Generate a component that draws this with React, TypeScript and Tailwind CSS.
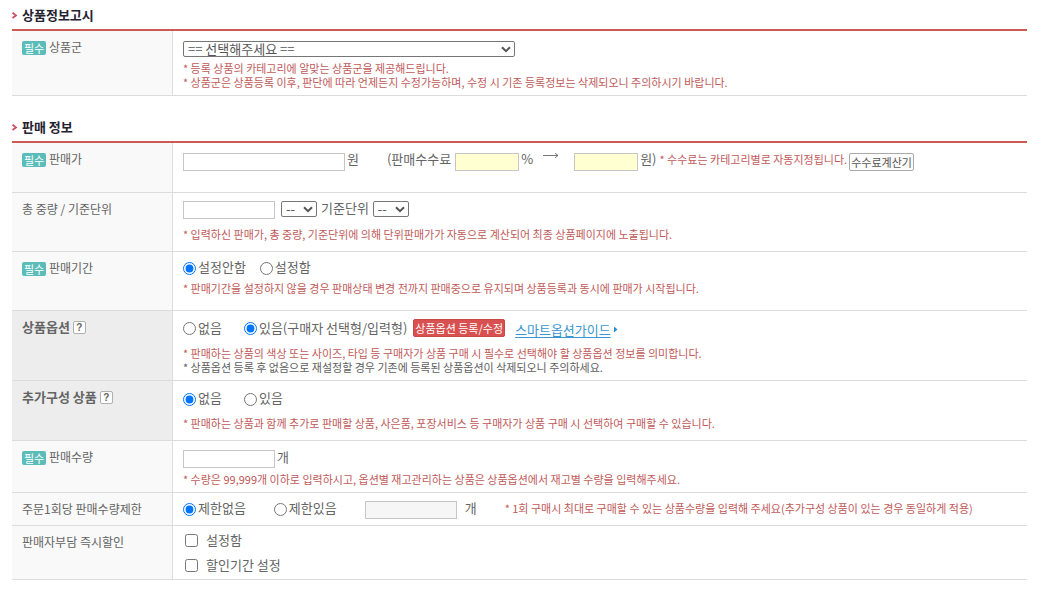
import type { ReactNode } from "react";

function SectionTitle({ children }: { children: ReactNode }) {
  return (
    <h2 className="flex h-7 items-center gap-1 border-b-2 border-[#cb5a50] box-content text-[13px] font-bold text-[#252230]">
      <svg width="6" height="7" viewBox="0 0 6 7" className="shrink-0" aria-hidden="true">
        <path d="M0.5 0.8 4 3.4 0.5 6" fill="none" stroke="#cc4a62" strokeWidth="1.7" />
      </svg>
      {children}
    </h2>
  );
}

type RowProps = {
  label: string;
  required?: boolean;
  help?: boolean;
  className: string;
  children: ReactNode;
};

function Row({ label, required, help, className, children }: RowProps) {
  return (
    <div role="group" aria-label={label} className="flex border-b border-[#dcdcdc]">
      <div
        className={`flex w-[161px] shrink-0 items-start gap-[3px] border-r border-[#dcdcdc] pt-2 pl-2.5 ${
          help ? "bg-[#ededed]" : "bg-[#f9f9f9]"
        }`}
      >
        {required && (
          <span className="mt-0.5 flex h-3.5 w-6 shrink-0 items-center justify-center rounded-[2px] bg-[#5bbcba] text-[11px] leading-3 text-white">
            필수
          </span>
        )}
        <span className={`whitespace-nowrap leading-4 ${help ? "text-[13px] font-bold" : "text-[12px]"}`}>
          {label}
        </span>
        {help && (
          <button
            type="button"
            aria-label={`${label} 도움말`}
            className="mt-0.5 flex size-[13px] items-center justify-center rounded-[2px] border border-[#b0b0b0] bg-white font-['Liberation_Sans'] text-[10px] font-bold leading-none"
          >
            ?
          </button>
        )}
      </div>
      <div className={`min-w-0 grow pl-2.5 ${className}`}>{children}</div>
    </div>
  );
}

function Hint({ children, dark }: { children: ReactNode; dark?: boolean }) {
  return (
    <p className={`text-[11px] leading-[14px] whitespace-nowrap ${dark ? "text-[#5e5e5e]" : "text-[#bf5a5a]"}`}>
      {children}
    </p>
  );
}

function Field({ label, className }: { label: string; className: string }) {
  return (
    <input
      type="text"
      aria-label={label}
      className={`h-[18px] border border-[#c6c6c6] px-1 text-[12px] outline-none ${className}`}
    />
  );
}

function Dropdown({ label, option, className }: { label: string; option: string; className: string }) {
  return (
    <div className={`relative h-4 ${className}`}>
      <select
        aria-label={label}
        className="block h-4 w-full appearance-none rounded-[2px] border border-[#767676] bg-white pl-1 text-[13px] leading-[14px] text-[#555]"
      >
        <option>{option}</option>
      </select>
      <svg
        width="10"
        height="7"
        viewBox="0 0 10 7"
        className="pointer-events-none absolute top-[5px] right-1"
        aria-hidden="true"
      >
        <path d="M1 1.2 5 5.2 9 1.2" fill="none" stroke="#555" strokeWidth="2" />
      </svg>
    </div>
  );
}

function Radio({ name, children, checked }: { name: string; children: ReactNode; checked?: boolean }) {
  return (
    <label className="flex items-center gap-0.5 whitespace-nowrap">
      <input type="radio" name={name} defaultChecked={checked} className="mt-0.5 size-[13px]" />
      {children}
    </label>
  );
}

export default function App() {
  return (
    <main className="bg-white pr-5 pb-3 pl-3 pt-px font-['Noto_Sans_CJK_KR',sans-serif] text-[13px] leading-4 text-[#646464]">
      <section>
        <SectionTitle>상품정보고시</SectionTitle>
        <Row label="상품군" required className="pt-2.5 pb-1.5">
          <Dropdown label="상품군" option="== 선택해주세요 ==" className="mb-1 w-[332px]" />
          <Hint>* 등록 상품의 카테고리에 알맞는 상품군을 제공해드립니다.</Hint>
          <Hint>* 상품군은 상품등록 이후, 판단에 따라 언제든지 수정가능하며, 수정 시 기존 등록정보는 삭제되오니 주의하시기 바랍니다.</Hint>
        </Row>
      </section>

      <section className="mt-[17px]">
        <SectionTitle>판매 정보</SectionTitle>

        <Row label="판매가" required className="pt-2 pb-[21px]">
          <div className="flex items-start whitespace-nowrap">
            <Field label="판매가" className="mt-0.5 mr-0.5 w-[162px]" />
            <span>원</span>
            <span className="ml-7 mr-1">(판매수수료</span>
            <Field label="판매수수료율" className="mt-0.5 mr-0.5 w-16 bg-[#ffffd2]" />
            <span>%</span>
            <svg width="16" height="7" viewBox="0 0 16 7" className="mt-px mr-[15px] ml-2.5" aria-hidden="true">
              <path d="M0 3.5H15M12 1.2 15 3.5 12 5.8" fill="none" stroke="#777" />
            </svg>
            <Field label="판매수수료 금액" className="mt-0.5 mr-0.5 w-16 bg-[#ffffd2]" />
            <span className="mr-[3px]">원)</span>
            <div className="mt-px">
              <Hint>* 수수료는 카테고리별로 자동지정됩니다.</Hint>
            </div>
            <button
              type="button"
              className="mt-0.5 ml-0.5 h-[18px] rounded-[2px] border border-[#a9a9a9] bg-[#fcfcfc] px-px text-[11px] leading-4 text-[#555]"
            >
              수수료계산기
            </button>
          </div>
        </Row>

        <Row label="총 중량 / 기준단위" className="pt-2 pb-2.5">
          <div className="mb-2 flex items-start">
            <Field label="총 중량" className="mr-1.5 w-[92px]" />
            <Dropdown label="중량 단위" option="--" className="mr-1 w-9" />
            <span className="mr-1 -mt-px">기준단위</span>
            <Dropdown label="기준단위" option="--" className="w-9" />
          </div>
          <Hint>* 입력하신 판매가, 총 중량, 기준단위에 의해 단위판매가가 자동으로 계산되어 최종 상품페이지에 노출됩니다.</Hint>
        </Row>

        <Row label="판매기간" required className="pt-[7px] pb-[15px]">
          <div className="mb-1.5 flex gap-3.5">
            <Radio name="period" checked>설정안함</Radio>
            <Radio name="period">설정함</Radio>
          </div>
          <Hint>* 판매기간을 설정하지 않을 경우 판매상태 변경 전까지 판매중으로 유지되며 상품등록과 동시에 판매가 시작됩니다.</Hint>
        </Row>

        <Row label="상품옵션" help className="pt-[7px] pb-1.5">
          <div className="mb-[9px] flex h-[19px] items-center whitespace-nowrap">
            <div className="mr-1.5 flex gap-[22px]">
              <Radio name="option">없음</Radio>
              <Radio name="option" checked>있음(구매자 선택형/입력형)</Radio>
            </div>
            <button
              type="button"
              className="h-[18px] rounded-[2px] border border-[#c8484a] bg-[#d8504f] px-px text-[11px] leading-4 text-white"
            >
              상품옵션 등록/수정
            </button>
            <a href="#guide" className="mt-1 ml-2.5 flex items-center gap-[3px] text-[#3b97cf]">
              <span className="underline underline-offset-2">스마트옵션가이드</span>
              <svg width="4" height="7" viewBox="0 0 4 7" aria-hidden="true">
                <path d="M0 0.5 3.5 3.5 0 6.5Z" fill="#2b8fd0" />
              </svg>
            </a>
          </div>
          <Hint>* 판매하는 상품의 색상 또는 사이즈, 타입 등 구매자가 상품 구매 시 필수로 선택해야 할 상품옵션 정보를 의미합니다.</Hint>
          <Hint dark>* 상품옵션 등록 후 없음으로 재설정할 경우 기존에 등록된 상품옵션이 삭제되오니 주의하세요.</Hint>
        </Row>

        <Row label="추가구성 상품" help className="pt-[9px] pb-2.5">
          <div className="mb-2.5 flex gap-[22px]">
            <Radio name="extra" checked>없음</Radio>
            <Radio name="extra">있음</Radio>
          </div>
          <Hint>* 판매하는 상품과 함께 추가로 판매할 상품, 사은품, 포장서비스 등 구매자가 상품 구매 시 선택하여 구매할 수 있습니다.</Hint>
        </Row>

        <Row label="판매수량" required className="pt-2 pb-1.5">
          <div className="mb-1 flex items-start gap-0.5">
            <Field label="판매수량" className="mt-px w-[92px]" />
            <span>개</span>
          </div>
          <Hint>* 수량은 99,999개 이하로 입력하시고, 옵션별 재고관리하는 상품은 상품옵션에서 재고별 수량을 입력해주세요.</Hint>
        </Row>

        <Row label="주문1회당 판매수량제한" className="pt-[7px] pb-1.5">
          <div className="flex items-start whitespace-nowrap">
            <div className="mr-7 flex gap-7">
              <Radio name="limit" checked>제한없음</Radio>
              <Radio name="limit">제한있음</Radio>
            </div>
            <Field label="1회 구매 제한 수량" className="mt-px mr-2 w-[92px] bg-[#f6f6f6]" />
            <span className="mr-7">개</span>
            <div className="mt-px">
              <Hint>* 1회 구매시 최대로 구매할 수 있는 상품수량을 입력해 주세요(추가구성 상품이 있는 경우 동일하게 적용)</Hint>
            </div>
          </div>
        </Row>

        <Row label="판매자부담 즉시할인" className="pt-1.5 pb-1.5">
          <div className="flex flex-col gap-[9px] pl-0.5">
            {["설정함", "할인기간 설정"].map((text) => (
              <label key={text} className="flex items-center gap-2">
                <input type="checkbox" className="size-[13px]" />
                {text}
              </label>
            ))}
          </div>
        </Row>
      </section>
    </main>
  );
}
